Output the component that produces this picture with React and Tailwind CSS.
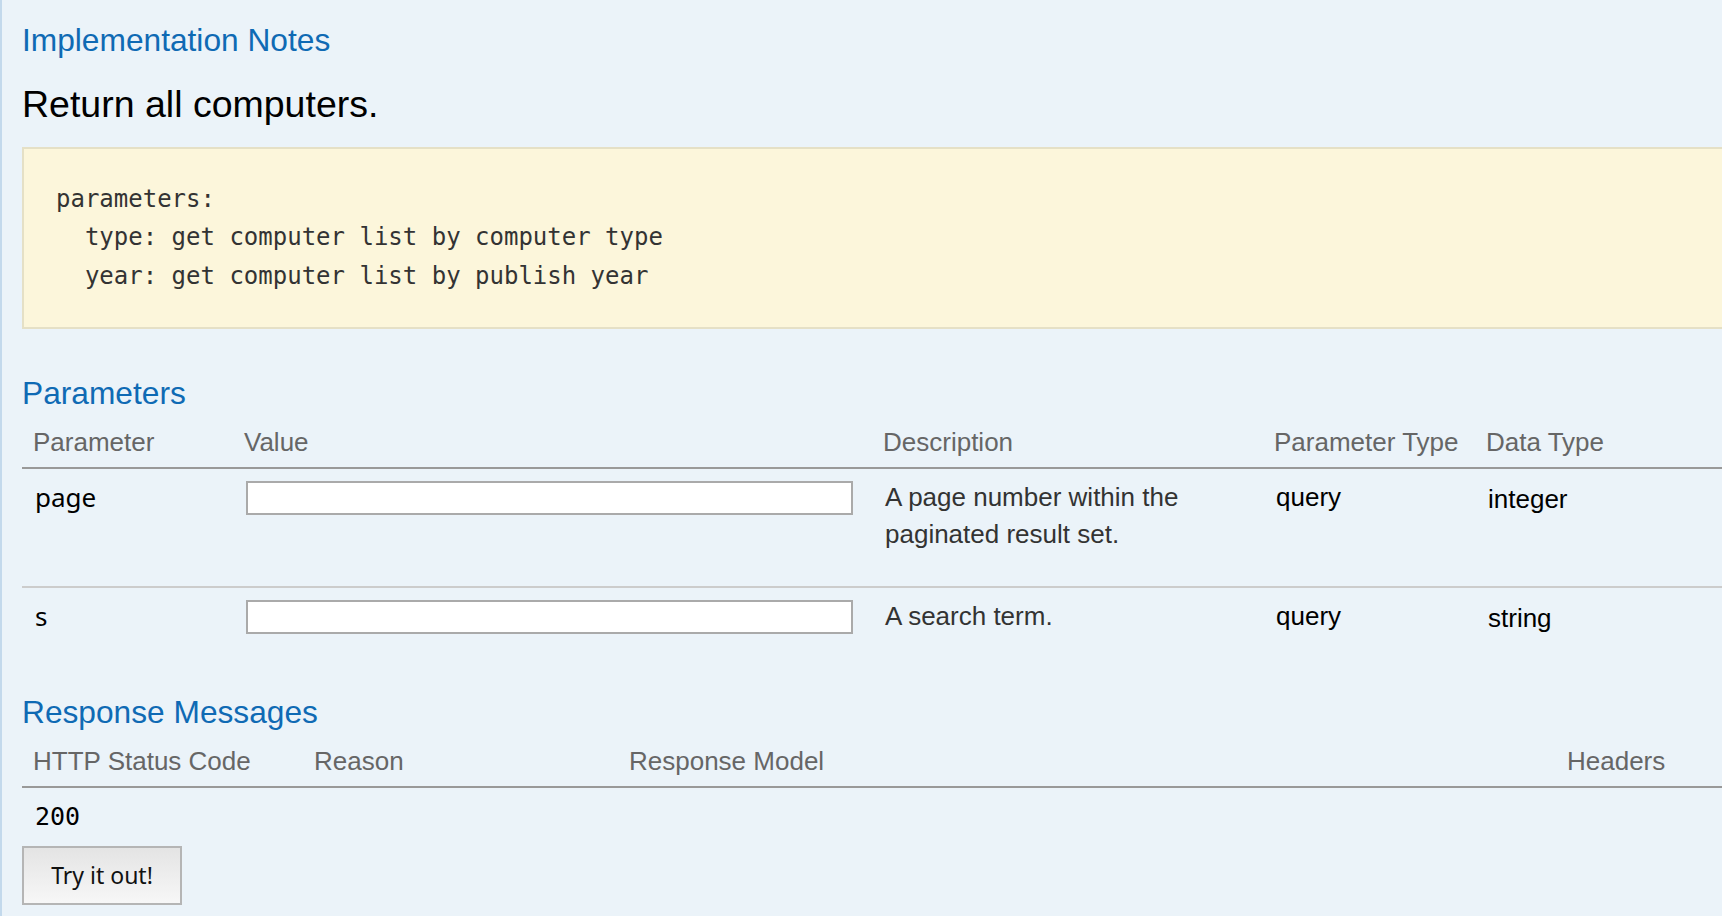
import React from "react";

const params = [
  { name: "page", desc: ["A page number within the", "paginated result set."], ptype: "query", dtype: "integer" },
  { name: "s", desc: ["A search term."], ptype: "query", dtype: "string" },
];

const helv = "font-['Liberation_Sans',Arial,sans-serif]";
const droid = "font-['Noto_Sans',sans-serif]";
const mono = "font-['DejaVu_Sans_Mono',monospace]";

const Heading = ({ children, className = "" }) => (
  <h4 className={`${helv} text-[31.7px] leading-[31px] text-[#0f6ab4] ${className}`}>{children}</h4>
);

const App = () => {
  return (
    <div className="min-h-screen w-full overflow-hidden bg-[#ebf3f9]">
      <div className="w-[1800px] border-l-2 border-[#c3d9ec] pl-5 pt-[25px] pb-10">
        <Heading>Implementation Notes</Heading>

        <p className={`${helv} mt-[30px] text-[37.5px] leading-[37px] text-black`}>Return all computers.</p>

        <pre
          className={`${mono} mt-6 border-2 border-[#e5e0c6] bg-[#fcf6db] px-8 pt-[31px] pb-8 text-[24px] leading-[38.4px] text-[#333]`}
        >
{`parameters:
  type: get computer list by computer type
  year: get computer list by publish year`}
        </pre>

        <Heading className="mt-[49px]">Parameters</Heading>

        {/* parameters table */}
        <div className="mt-[10px]">
          <div
            className={`${helv} grid grid-cols-[211px_639px_391px_212px_1fr] border-b-2 border-[#999] text-[26px] leading-[26px] text-[#666]`}
          >
            {["Parameter", "Value", "Description", "Parameter Type", "Data Type"].map((h) => (
              <div key={h} className="pl-[11px] pt-[10px] pb-3">
                {h}
              </div>
            ))}
          </div>

          {params.map((p, i) => (
            <div
              key={p.name}
              className={`grid grid-cols-[211px_639px_391px_212px_1fr] text-[26px] leading-[37px] ${
                i < params.length - 1 ? "border-b-2 border-[#cccccc]" : ""
              }`}
            >
              <div className={`${droid} pl-[13px] pt-[10px] text-[26px] text-black`}>{p.name}</div>
              <div className="pl-[13px] pt-[10px]">
                <input
                  type="text"
                  className="mt-[2px] block h-[34px] w-[607px] border-2 border-[#aaaaaa] bg-white outline-none"
                />
              </div>
              <div className={`${helv} pl-[13px] pt-[10px] pb-[10px] text-[#333]`}>
                <p className="mb-[23px]">
                  {p.desc.map((line) => (
                    <span key={line} className="block">
                      {line}
                    </span>
                  ))}
                </p>
              </div>
              <div className={`${helv} pl-[13px] pt-[10px] text-black`}>{p.ptype}</div>
              <div className={`${helv} pl-[13px] pt-[12px] text-black`}>{p.dtype}</div>
            </div>
          ))}
        </div>

        <Heading className="mt-[29px]">Response Messages</Heading>

        {/* response messages table */}
        <div className="mt-[10px]">
          <div
            className={`${helv} grid grid-cols-[281px_315px_938px_1fr] border-b-2 border-[#999] text-[26px] leading-[26px] text-[#666]`}
          >
            {["HTTP Status Code", "Reason", "Response Model", "Headers"].map((h) => (
              <div key={h} className="pl-[11px] pt-[10px] pb-3">
                {h}
              </div>
            ))}
          </div>
          <div className="grid grid-cols-[281px_315px_938px_1fr]">
            <div className={`${mono} pl-[13px] pt-[10px] pb-[11px] text-[25px] leading-[37px] text-black`}>200</div>
            <div />
            <div />
            <div />
          </div>
        </div>

        <button
          type="button"
          className={`${droid} block h-[59px] w-[160px] border-2 border-[#b5b5b5] bg-linear-to-b from-[#e4e4e4] to-[#f7f7f7] text-[23px] text-[#111]`}
        >
          Try it out!
        </button>
      </div>
    </div>
  );
};

export default App;
